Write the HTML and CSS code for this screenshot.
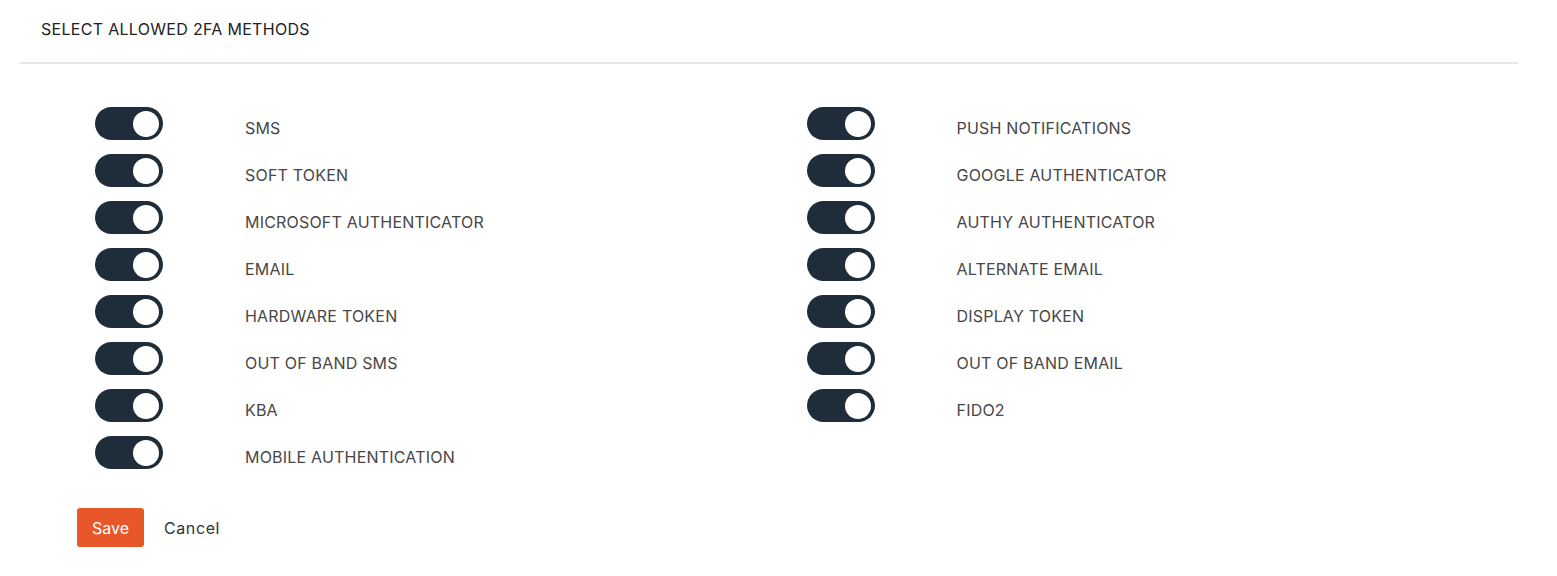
FILE: index.html
```html
<!DOCTYPE html>
<html>
<head>
<meta charset="utf-8">
<link rel="stylesheet" href="styles.css">
</head>
<body>
<div class="panel">
  <div class="panel-header">SELECT ALLOWED 2FA METHODS</div>
  <div class="panel-body">
    <div class="methods">
      <div class="col">
        <div class="item"><span class="toggle"><span class="knob"></span></span><span class="label">SMS</span></div>
        <div class="item"><span class="toggle"><span class="knob"></span></span><span class="label">SOFT TOKEN</span></div>
        <div class="item"><span class="toggle"><span class="knob"></span></span><span class="label">MICROSOFT AUTHENTICATOR</span></div>
        <div class="item"><span class="toggle"><span class="knob"></span></span><span class="label">EMAIL</span></div>
        <div class="item"><span class="toggle"><span class="knob"></span></span><span class="label">HARDWARE TOKEN</span></div>
        <div class="item"><span class="toggle"><span class="knob"></span></span><span class="label">OUT OF BAND SMS</span></div>
        <div class="item"><span class="toggle"><span class="knob"></span></span><span class="label">KBA</span></div>
        <div class="item"><span class="toggle"><span class="knob"></span></span><span class="label">MOBILE AUTHENTICATION</span></div>
      </div>
      <div class="col">
        <div class="item"><span class="toggle"><span class="knob"></span></span><span class="label">PUSH NOTIFICATIONS</span></div>
        <div class="item"><span class="toggle"><span class="knob"></span></span><span class="label">GOOGLE AUTHENTICATOR</span></div>
        <div class="item"><span class="toggle"><span class="knob"></span></span><span class="label">AUTHY AUTHENTICATOR</span></div>
        <div class="item"><span class="toggle"><span class="knob"></span></span><span class="label">ALTERNATE EMAIL</span></div>
        <div class="item"><span class="toggle"><span class="knob"></span></span><span class="label">DISPLAY TOKEN</span></div>
        <div class="item"><span class="toggle"><span class="knob"></span></span><span class="label">OUT OF BAND EMAIL</span></div>
        <div class="item"><span class="toggle"><span class="knob"></span></span><span class="label">FIDO2</span></div>
      </div>
    </div>
    <div class="actions">
      <button class="btn-save">Save</button>
      <button class="btn-cancel">Cancel</button>
    </div>
  </div>
</div>
</body>
</html>
```
FILE: styles.css
```css
* { box-sizing: border-box; }
html, body { margin: 0; padding: 0; background: #fff; }
body { font-family: Inter, "Noto Sans", sans-serif; color: #444; }
.panel { margin: 0 39px 0 20px; }
.panel-header {
  height: 64px;
  padding: 20px 0 0 21px;
  font-size: 16px;
  letter-spacing: 0.3px;
  color: #222;
  line-height: 18px;
  border-bottom: 2px solid #e6e6e6;
}
.panel-body { padding: 43px 0 0 75px; }
.methods { display: flex; }
.col { width: 712px; display: flex; flex-direction: column; gap: 14px; }
.item { display: flex; align-items: center; height: 33px; }
.toggle {
  width: 68px; height: 33px;
  border-radius: 17px;
  background: #1f2d3a;
  display: flex; align-items: center; justify-content: flex-end;
  padding-right: 4px;
  flex: none;
}
.knob { width: 26px; height: 26px; border-radius: 50%; background: #fff; }
.label {
  margin-left: 82px;
  font-size: 16px;
  letter-spacing: 0.2px;
  color: #474747;
  padding-top: 8px;
}
.actions { display: flex; align-items: center; margin: 39px 0 0 -18px; gap: 20px; }
.btn-save {
  width: 67px; height: 39px;
  background: #e8572a;
  color: #fff;
  border: none; border-radius: 3px;
  font-family: inherit; font-size: 16px;
}
.btn-cancel {
  background: none; border: none; padding: 0;
  font-family: inherit; font-size: 16px; letter-spacing: 0.6px; color: #333;
}
```
